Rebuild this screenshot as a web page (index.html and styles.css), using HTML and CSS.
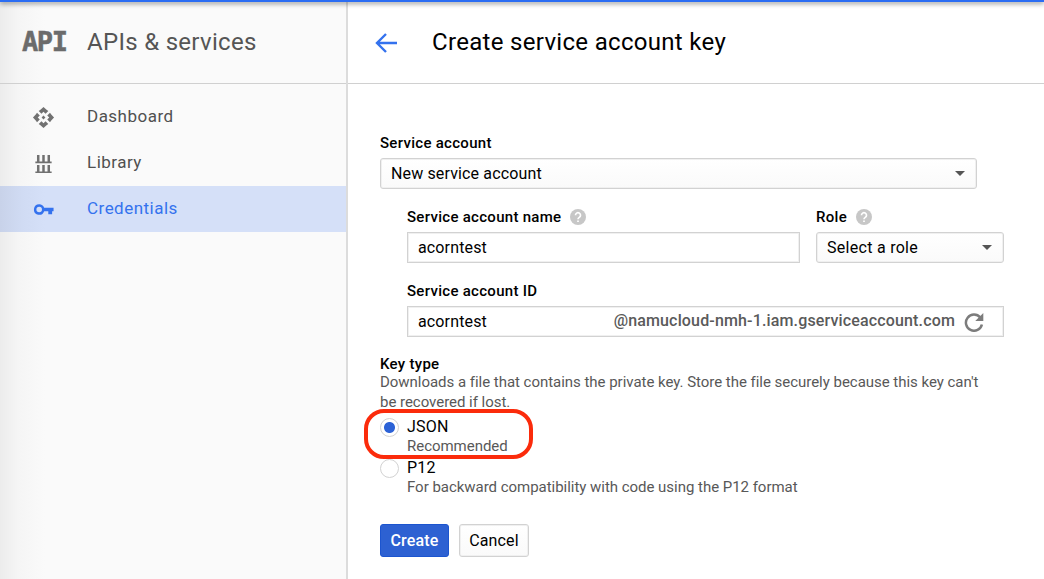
FILE: index.html
```html
<!DOCTYPE html>
<html lang="en">
<head>
<meta charset="utf-8">
<title>Create service account key</title>
<link rel="stylesheet" href="styles.css">
</head>
<body>
<div class="topbar"></div>
<div class="app">
  <nav class="sidebar">
    <div class="product">
      <span class="product-logo">API</span>
      <span class="product-name">APIs &amp; services</span>
    </div>
    <div class="nav">
      <a class="nav-item">
        <svg class="nav-icon" viewBox="0 0 24 24"><path d="M14 12l-2 2-2-2 2-2zM12 6l2.12 2.12 2.9-2.900L15.200 3.900 12 1 8.800 3.900 6.980 5.220l2.900 2.900zM6 12l2.120-2.120-2.900-2.900L3.900 8.800 1 12l2.900 3.200 1.320 1.820 2.900-2.900zM18 12l-2.120 2.120 2.900 2.900L20.100 15.200 23 12l-2.900-3.200-1.320-1.820-2.900 2.900zM12 18l-2.120-2.120-2.900 2.900L8.800 20.100 12 23l3.200-2.900 1.820-1.320-2.900-2.900z"/></svg>
        <span>Dashboard</span>
      </a>
      <a class="nav-item">
        <svg class="nav-icon" viewBox="0 0 24 24"><path d="M3.500 10h17v1.700h-17zM5.200 3h2.600v7H5.200zM10.700 3h2.600v7h-2.600zM16.200 3h2.600v7h-2.600zM3.500 20.300h17V22h-17zM5.200 13.500h2.600v7H5.200zM10.700 13.500h2.600v7h-2.600zM16.200 13.500h2.600v7h-2.600z"/></svg>
        <span>Library</span>
      </a>
      <a class="nav-item active">
        <svg class="nav-icon" viewBox="0 0 24 24"><path fill-rule="evenodd" d="M7.500 6.500a5.500 5.500 0 1 0 5.200 7.300H17V17h4v-3.200h1.500v-3.600h-9.800A5.500 5.500 0 0 0 7.500 6.500zm0 2.600a2.900 2.900 0 1 1 0 5.800 2.900 2.900 0 0 1 0-5.800z"/></svg>
        <span>Credentials</span>
      </a>
    </div>
  </nav>
  <main class="main">
    <header class="header">
      <svg class="back" viewBox="0 0 24 22"><path d="M12 2L3 11l9 9M3 11H23"/></svg>
      <h1 class="title">Create service account key</h1>
    </header>
    <form class="form">
      <div class="label l-account">Service account</div>
      <div class="box select account"><span>New service account</span><i class="caret"></i></div>
      <div class="nested">
        <div class="row">
          <div class="field name">
            <div class="label"><span>Service account name</span><svg class="help" viewBox="0 0 16 16"><circle cx="8" cy="8" r="8"/><path d="M5.500 6.300a2.500 2.500 0 1 1 3.900 2C8.500 8.900 8 9.200 8 10.200"/><path d="M8 11.600v1.500"/></svg></div>
            <div class="box"><span>acorntest</span></div>
          </div>
          <div class="field role">
            <div class="label"><span>Role</span><svg class="help" viewBox="0 0 16 16"><circle cx="8" cy="8" r="8"/><path d="M5.500 6.300a2.500 2.500 0 1 1 3.900 2C8.500 8.900 8 9.200 8 10.200"/><path d="M8 11.600v1.500"/></svg></div>
            <div class="box select"><span class="role-value">Select a role</span><i class="caret"></i></div>
          </div>
        </div>
        <div class="label l-id">Service account ID</div>
        <div class="box"><span>acorntest</span><span class="domain">@namucloud-nmh-1.iam.gserviceaccount.com</span><svg class="refresh" viewBox="0 0 20 20"><path class="arc" d="M16.600 4.800A8.500 8.500 0 1 0 18.300 12"/><path class="head" d="M19.800 0v8.500h-8.500z"/></svg></div>
      </div>
      <div class="label l-type">Key type</div>
      <p class="desc">Downloads a file that contains the private key. Store the file securely because this key can't<br>be recovered if lost.</p>
      <div class="options">
        <div class="option">
          <i class="radio checked"></i>
          <div><div class="option-name">JSON</div><div class="hint">Recommended</div></div>
          <i class="highlight"></i>
        </div>
        <div class="option">
          <i class="radio"></i>
          <div><div class="option-name">P12</div><div class="hint">For backward compatibility with code using the P12 format</div></div>
        </div>
      </div>
      <div class="actions">
        <button type="button" class="btn primary">Create</button>
        <button type="button" class="btn">Cancel</button>
      </div>
    </form>
  </main>
</div>
</body>
</html>
```

FILE: styles.css
```css
* { box-sizing: border-box; }
body {
  margin: 0;
  width: 1044px;
  height: 579px;
  overflow: hidden;
  display: flex;
  flex-direction: column;
  background: #fff;
  color: #000;
  font-family: Roboto, "Liberation Sans", sans-serif;
  font-size: 16px;
}
.topbar {
  height: 2px;
  flex: none;
  position: relative;
  background: #2b6df3;
  box-shadow: 0 1px 5px rgba(0, 0, 0, .75);
}
.app { flex: 1; display: flex; }
.sidebar {
  width: 348px;
  border-right: 2px solid #dcdcdc;
  background: linear-gradient(90deg, #ececec 0, #f5f5f5 18px, #fafafa 45px);
}
.product {
  height: 82px;
  border-bottom: 1px solid #d0d0d0;
  display: flex;
  align-items: center;
  padding: 0 0 2px 22px;
}
.product-logo {
  width: 65px;
  font: bold 27px/30px "DejaVu Sans Mono", monospace;
  letter-spacing: -1.4px;
  color: #6b6b6b;
  -webkit-text-stroke: .5px #6b6b6b;
}
.product-name { font-size: 24px; line-height: 30px; letter-spacing: .3px; color: #555; }
.nav { padding-top: 10px; }
.nav-item {
  height: 46px;
  display: flex;
  align-items: center;
  padding: 0 0 2px 32px;
  color: #505050;
  font-size: 17px;
  letter-spacing: .48px;
}
.nav-icon { width: 23px; height: 23px; margin: 2px 32px 0 0; fill: #717171; }
.active { background: linear-gradient(90deg, #c8d2e9 0, #d0dbf3 22px, #d5e0f8 45px); color: #3472ee; }
.active .nav-icon { fill: #3472ee; }
.main { flex: 1; }
.header {
  height: 82px;
  border-bottom: 1px solid #d0d0d0;
  display: flex;
  align-items: center;
  padding: 0 0 2px 26px;
}
.back { width: 24px; height: 22px; margin: 2px 34px 0 0; fill: none; stroke: #3472ee; stroke-width: 2.4; }
.title { margin: 0; font-size: 24px; line-height: 30px; font-weight: 400; letter-spacing: .31px; }
.form { padding: 49px 0 0 32px; }
.label {
  height: 20px;
  display: flex;
  align-items: center;
  font-size: 15px;
  font-weight: 500;
  letter-spacing: .29px;
}
.l-account { margin-bottom: 5px; }
.box {
  height: 31px;
  border: 1px solid #d2d2d2;
  box-shadow: inset 0 0 0 1px #f0f0f0;
  display: flex;
  align-items: center;
  padding: 0 10px;
  font-size: 16px;
  letter-spacing: .14px;
}
.select { justify-content: space-between; border-radius: 3px; background: linear-gradient(#fff, #fafafa); }
.account { width: 597px; }
.caret { border: 5.5px solid transparent; border-top: 5px solid #555; border-bottom: 0; margin-right: 1px; }
.role-value { letter-spacing: .28px; }
.nested { width: 597px; margin: 18px 0 0 27px; }
.row { display: flex; gap: 16px; }
.name { width: 393px; }
.role { width: 188px; }
.field .label { margin-bottom: 5px; }
.help { width: 16px; height: 16px; margin-left: 9px; fill: #c7c7c7; }
.help path { fill: none; stroke: #fff; stroke-width: 1.7; }
.l-id { margin: 18px 0 5px; }
.domain { margin-left: auto; font-weight: 500; color: #5a5a5a; padding-bottom: 3px; letter-spacing: .15px; }
.refresh { width: 20px; height: 19px; margin: 2px 9px 0 9px; }
.arc { fill: none; stroke: #7c7c7c; stroke-width: 2.6; }
.head { fill: #7c7c7c; }
.l-type { height: 18px; margin-top: 18px; }
.desc {
  margin: -1px 0 0;
  font-size: 15px;
  line-height: 20px;
  letter-spacing: -.03px;
  color: #585858;
  white-space: nowrap;
}
.options { padding-top: 4px; }
.option { position: relative; display: flex; height: 41px; }
.radio {
  width: 19px;
  height: 19px;
  margin: 2px 8px 0 0;
  border: 1.5px solid #d2d2d2;
  border-radius: 50%;
  background: #fff;
}
.checked { background: radial-gradient(circle, #2c62d6 5px, #fff 6px); }
.option-name { font-size: 16px; line-height: 22px; letter-spacing: .25px; }
.hint { font-size: 15px; line-height: 17px; letter-spacing: -.03px; color: #585858; }
.highlight {
  position: absolute;
  left: -16px;
  top: -7px;
  width: 169px;
  height: 50px;
  border: 4.5px solid #fb2b0b;
  border-radius: 20px;
}
.actions { display: flex; gap: 10px; margin-top: 26px; }
.btn {
  width: 70px;
  height: 33px;
  padding: 0 0 1px;
  border: 1px solid #d2d2d2;
  box-shadow: inset 0 0 0 1px #f0f0f0;
  border-radius: 3px;
  background: linear-gradient(#fff, #fafafa);
  color: #000;
  font: 400 16px Roboto, sans-serif;
  letter-spacing: .15px;
}
.primary { width: 69px; border-color: #1c55cf; box-shadow: none; background: #2d61d2; color: #fff; font-weight: 500; }
```
